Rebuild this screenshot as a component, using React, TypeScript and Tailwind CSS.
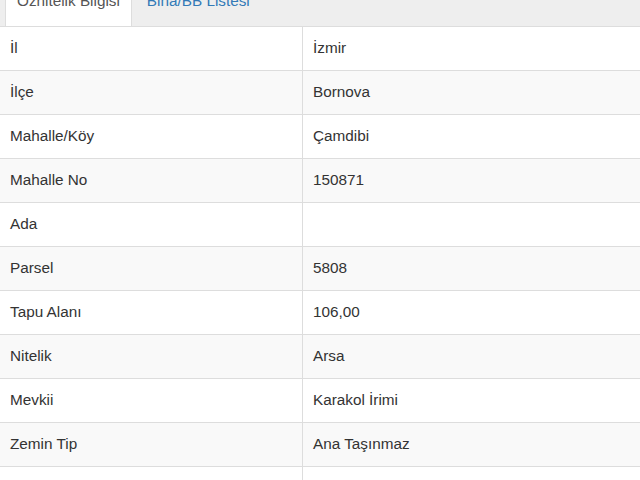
import React from "react";

const rows: [string, string][] = [
  ["İl", "İzmir"],
  ["İlçe", "Bornova"],
  ["Mahalle/Köy", "Çamdibi"],
  ["Mahalle No", "150871"],
  ["Ada", ""],
  ["Parsel", "5808"],
  ["Tapu Alanı", "106,00"],
  ["Nitelik", "Arsa"],
  ["Mevkii", "Karakol İrimi"],
  ["Zemin Tip", "Ana Taşınmaz"],
  ["Pafta", "-"],
];

export default function App() {
  return (
    <div
      className="w-[640px] h-[480px] overflow-hidden bg-white text-[#333333] text-[15.3px]"
      style={{ fontFamily: '"Liberation Sans", Arial, sans-serif' }}
    >
      <div className="h-[27px] bg-[#eeeeee] border-b border-[#dddddd] flex items-stretch pl-[5px]">
        <div className="bg-white border-l border-r border-[#dddddd] px-[11px] flex flex-col overflow-hidden">
          <span className="-mt-[9px] leading-[20px] text-[#555555] whitespace-nowrap">Öznitelik Bilgisi</span>
        </div>
        <div className="px-[15px] flex flex-col overflow-hidden">
          <span className="-mt-[9px] leading-[20px] text-[#337ab7] whitespace-nowrap">Bina/BB Listesi</span>
        </div>
      </div>
      <div className="flex flex-col">
        {rows.map(([k, v], i) => (
          <div
            key={k}
            className={
              "h-[44px] shrink-0 flex border-b border-[#dddddd] " +
              (i % 2 === 1 ? "bg-[#f9f9f9]" : "bg-white")
            }
          >
            <div className="w-[303px] shrink-0 border-r border-[#dddddd] pl-[10px] flex items-center">
              {k}
            </div>
            <div className="flex-1 pl-[10px] flex items-center">{v}</div>
          </div>
        ))}
      </div>
    </div>
  );
}
